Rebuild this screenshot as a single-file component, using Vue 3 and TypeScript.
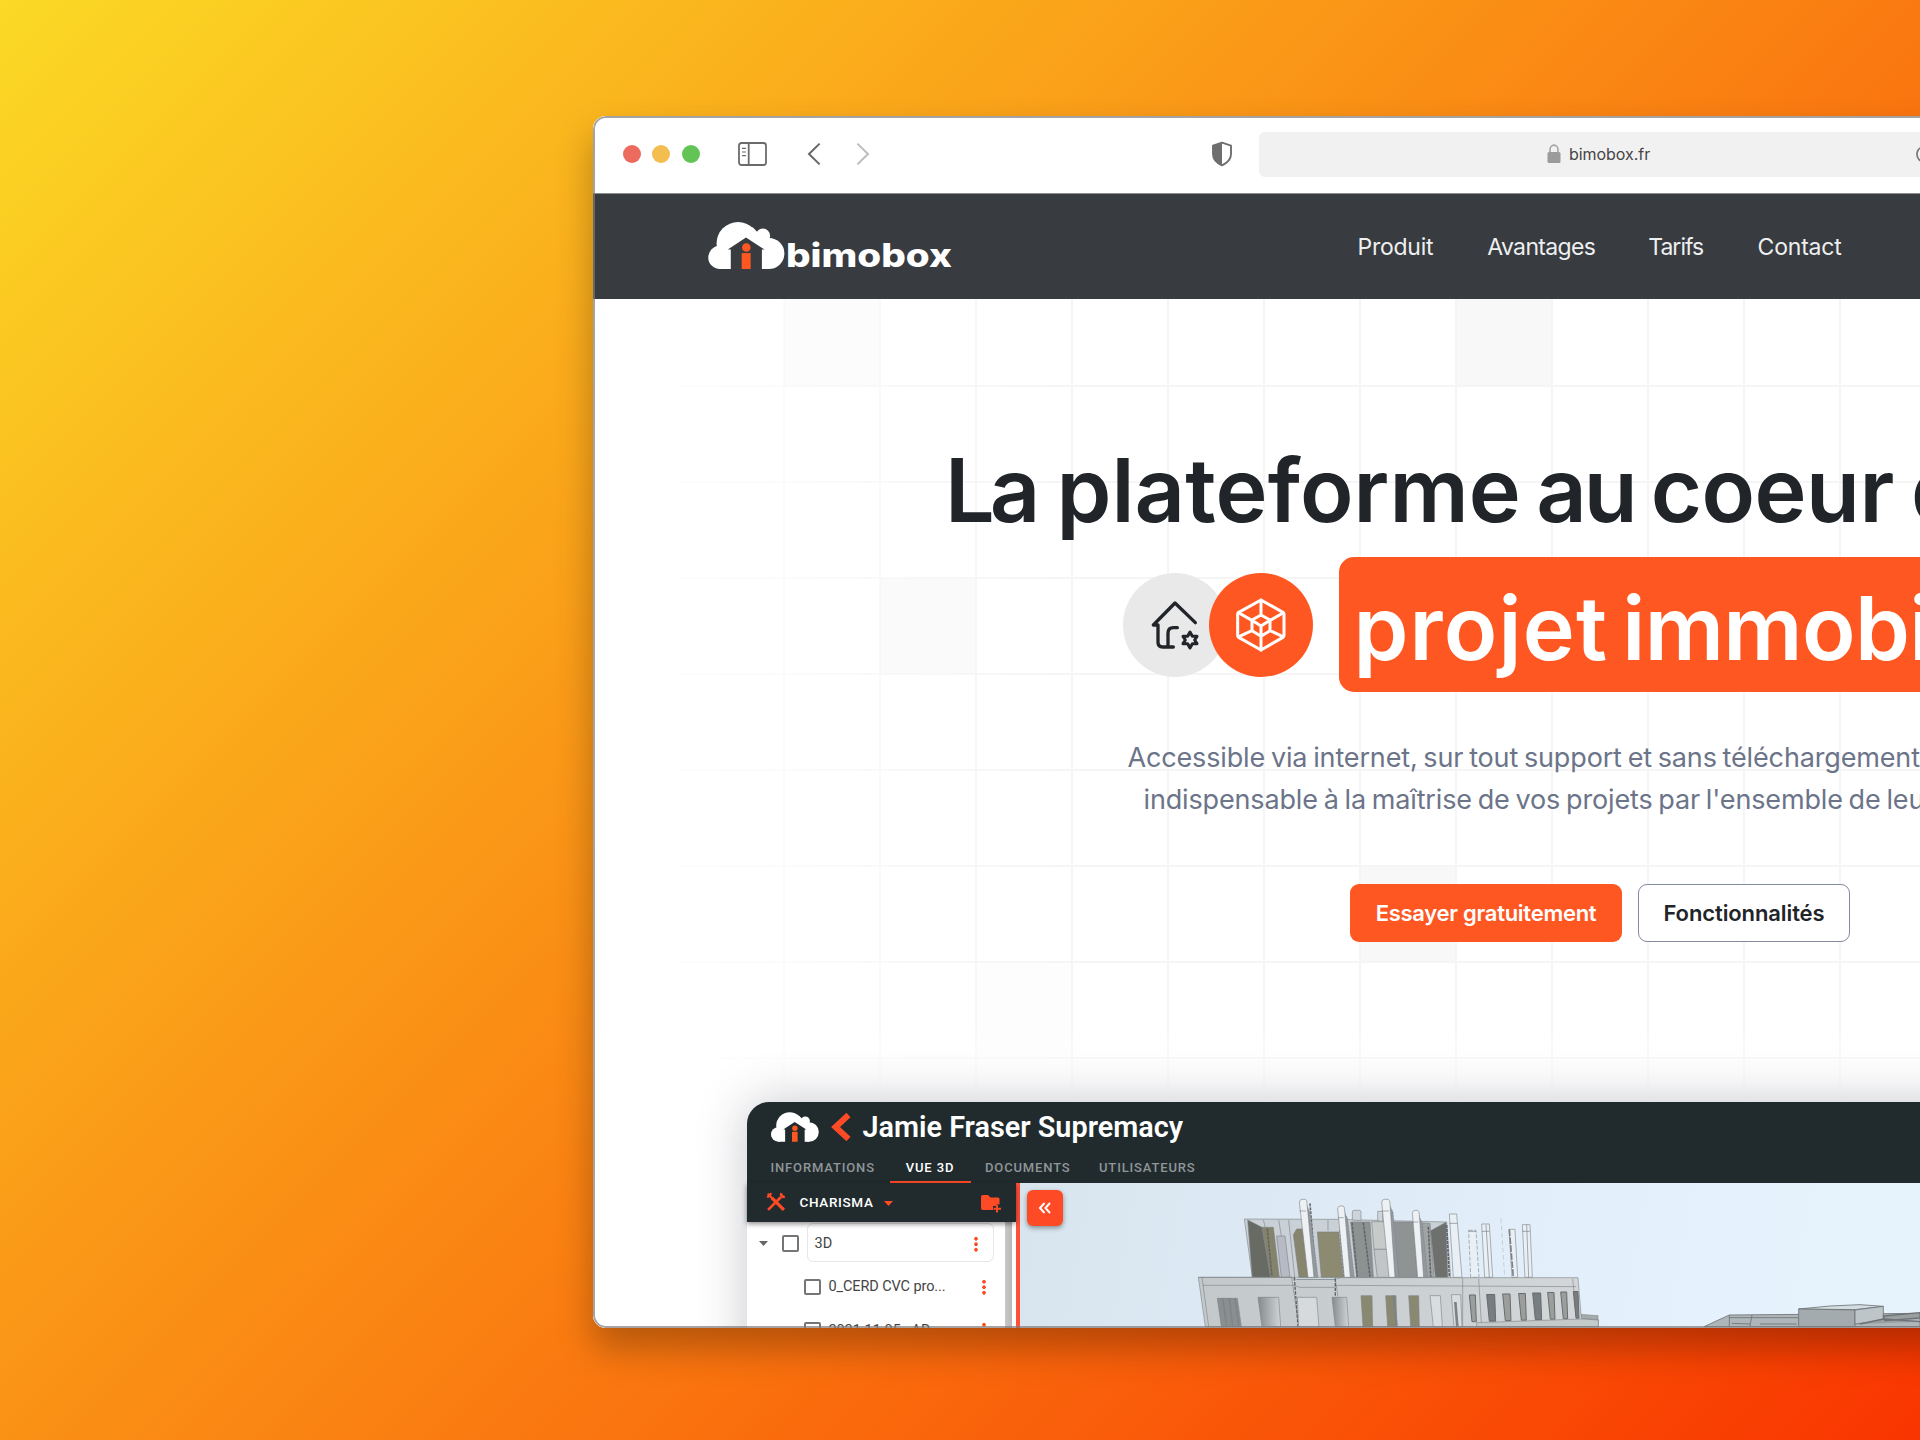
<script setup lang="ts">
const columns: number[] = Array.from({ length: 13 }, (_, i) => 191 + i * 96)
const rows: number[] = Array.from({ length: 8 }, (_, i) => 87 + i * 96)
const cells: { x: number; y: number; h: number; o: number }[] = [
  { x: 191, y: 0, h: 87, o: 0.4 },
  { x: 863, y: 0, h: 87, o: 1 },
  { x: 287, y: 279, h: 96, o: 0.7 },
  { x: 767, y: 567, h: 96, o: 1 },
  { x: 383, y: 663, h: 96, o: 0.35 },
]
const nav: { label: string; gap: number; spacing: number }[] = [
  { label: 'Produit', gap: 0, spacing: -0.25 },
  { label: 'Avantages', gap: 54, spacing: -0.65 },
  { label: 'Tarifs', gap: 53, spacing: -1 },
  { label: 'Contact', gap: 54.5, spacing: -0.2 },
]
interface Word { text: string; spacing: number; after: number }
const headline: Word[] = [
  { text: 'La', spacing: -5, after: 0.5 },
  { text: 'plateforme', spacing: 0.1, after: -5.4 },
  { text: 'au', spacing: -3, after: -4.6 },
  { text: 'coeur', spacing: -0.5, after: -3.5 },
  { text: 'de', spacing: -0.5, after: 0 },
]
const highlight: Word[] = [
  { text: 'projet', spacing: 1.2, after: -6.8 },
  { text: 'immobilier', spacing: -0.6, after: 0 },
]
const wordStyle = (w: Word) => ({ letterSpacing: w.spacing + 'px', marginRight: w.after + 'px' })
const files: string[] = ['0_CERD CVC pro...', '2021-11-05 - AR...']
const windowsLeft: number[][] = [[543, 578], [617, 650], [686, 718]]
const windowsRight: number[][] = [[868, 886], [920, 944], [968, 990], [1016, 1036], [1058, 1082], [1103, 1122], [1142, 1160], [1180, 1194]]
const towers: { x: number; y: number; w: number; s: number }[] = [
  { x: 358, y: 88, w: 20, s: 24 },
  { x: 473, y: 108, w: 18, s: 20 },
  { x: 605, y: 88, w: 22, s: 18 },
  { x: 697, y: 121, w: 18, s: 16 },
]
</script>

<template>
  <svg class="defs" width="0" height="0">
    <symbol id="cloud" viewBox="26 34 231 142">
      <g fill="#fff">
        <circle cx="61" cy="141" r="35" />
        <circle cx="116" cy="99" r="65" />
        <circle cx="191" cy="76" r="22" />
        <circle cx="209" cy="129" r="47" />
        <path d="M61 100 160 50 209 100V176H61Z" />
      </g>
      <path d="M140 81 196 117H188V177H94V117H85Z" fill="currentColor" />
      <circle cx="141" cy="111" r="13" fill="#ff5722" />
      <rect x="127" y="128" width="27" height="48" fill="#ff5722" />
    </symbol>
  </svg>
  <main class="scene">
    <section class="window">
      <div class="toolbar">
        <i class="light red"></i><i class="light yellow"></i><i class="light green"></i>
        <svg class="side" width="29" height="24" viewBox="0 0 29 24" fill="none" stroke="#6b6b6b" stroke-width="1.8">
          <rect x="1" y="1" width="27" height="22" rx="2.5" />
          <path d="M10.7 1V23" />
          <path d="M4 6.3h4M4 10h4M4 13.7h4" stroke-width="1.2" />
        </svg>
        <svg class="back" width="14" height="24" viewBox="0 0 14 24" fill="none" stroke="#666" stroke-width="2"><path d="M12.6 1.6 2 12 12.6 22.4" /></svg>
        <svg class="fwd" width="14" height="24" viewBox="0 0 14 24" fill="none" stroke="#bcbcbc" stroke-width="2"><path d="M1.4 1.6 12 12 1.4 22.4" /></svg>
        <svg class="shield" width="22" height="26" viewBox="0 0 22 26">
          <path d="M11 1.6 20 4.6V13C20 18 16.5 21.8 11 24.4 5.5 21.8 2 18 2 13V4.6Z" fill="none" stroke="#6e6e6e" stroke-width="1.9" stroke-linejoin="round" />
          <path d="M11 1.6V24.4C5.5 21.8 2 18 2 13V4.6Z" fill="#6e6e6e" />
        </svg>
        <div class="url">
          <svg width="14" height="19" viewBox="0 0 14 19"><path d="M3 9V5.6a4 4.5 0 0 1 8 0V9" fill="none" stroke="#a3a3a3" stroke-width="1.6" /><rect x=".5" y="8" width="13" height="11" rx="1.5" fill="#9b9b9b" /></svg>
          <span>bimobox.fr</span>
          <svg class="reload" width="20" height="20" viewBox="0 0 20 20" fill="none" stroke="#777" stroke-width="1.7"><path d="M12 2.5A8 8 0 1 0 18 10" /><path d="M9 0l4 2.7L9.5 6" /></svg>
        </div>
      </div>
      <header class="site">
        <svg class="cloud" width="77" height="47"><use href="#cloud" /></svg>
        <svg class="wordmark" width="170" height="40"><text x="1" y="33" textLength="166" lengthAdjust="spacingAndGlyphs">bimobox</text></svg>
        <nav>
          <a v-for="n in nav" :key="n.label" :style="{ marginLeft: n.gap + 'px', letterSpacing: n.spacing + 'px' }">{{ n.label }}</a>
        </nav>
      </header>
      <div class="hero">
        <svg class="grid" width="1327" height="803">
          <defs>
            <linearGradient id="fx" x1="0" x2="1"><stop offset=".06" stop-color="#fff" stop-opacity=".15" /><stop offset=".36" stop-color="#fff" /></linearGradient>
            <linearGradient id="fy" x1="0" y1="0" x2="0" y2="1"><stop offset=".9" stop-color="#fff" stop-opacity="0" /><stop offset="1" stop-color="#fff" /></linearGradient>
            <mask id="fade"><rect width="1327" height="803" fill="url(#fx)" /></mask>
          </defs>
          <rect v-for="(c, i) in cells" :key="'c' + i" :x="c.x" :y="c.y" width="96" :height="c.h" fill="#f8f8f8" :opacity="c.o" />
          <g mask="url(#fade)" fill="#f5f5f6">
            <rect v-for="x in columns" :key="'x' + x" :x="x - 1" y="0" width="2" height="803" />
            <rect v-for="y in rows" :key="'y' + y" x="86" :y="y - 1" width="1241" height="2" />
          </g>
          <rect width="1327" height="803" fill="url(#fy)" />
        </svg>
        <h1>
          <span class="line first"><template v-for="w in headline" :key="w.text"><span :style="wordStyle(w)">{{ w.text }}</span>{{ ' ' }}</template></span>
          <span class="line second">
            <span class="disc gray">
              <svg width="104" height="104" viewBox="0 0 312 312" fill="none" stroke="#212529" stroke-width="10" stroke-linecap="round" stroke-linejoin="round">
                <path d="M217 149 156 90 91 156H105V208Q105 222 119 222H151M135 220V181Q135 164 151 164H163" />
                <path d="M201 177 208 190H222L215 201 222 212H208L201 225 194 212H180L187 201 180 190H194Z" stroke-width="9" />
              </svg>
            </span>
            <span class="disc orange">
              <svg width="104" height="104" viewBox="0 0 312 312" fill="none" stroke="#fff" stroke-width="9" stroke-linecap="round" stroke-linejoin="round">
                <path d="M156 81 222 118Q225 120 225 124V187Q225 191 222 193L156 231 89 193Q86 191 86 187V124Q86 120 89 118Z" />
                <path d="M156 81V124M90 120 130 143M222 120 182 143M90 191 130 172M222 191 182 172M156 231V158M156 126 183 141V173L156 190 129 173V141ZM129 142 156 159 183 142" />
              </svg>
            </span>
            <span class="mark"><template v-for="w in highlight" :key="w.text"><span :style="wordStyle(w)">{{ w.text }}</span>{{ ' ' }}</template></span>
          </span>
        </h1>
        <p>
          <span class="l1">Accessible via internet, sur tout support et sans téléchargement,</span>
          <span class="l2">indispensable à la maîtrise de vos projets par l'ensemble de leurs</span>
        </p>
        <div class="actions">
          <a class="btn solid"><span>Essayer gratuitement</span></a>
          <a class="btn outline"><span>Fonctionnalités</span></a>
        </div>
        <div class="card">
          <div class="title">
            <svg class="mini" width="48" height="30"><use href="#cloud" /></svg>
            <svg class="chev" width="20" height="28" viewBox="0 0 20 28" fill="none" stroke="#ff4a26" stroke-width="6"><path d="M17.5 2 4.5 14 17.5 26" /></svg>
            <strong>Jamie Fraser Supremacy</strong>
          </div>
          <div class="tabs">
            <span class="t1">INFORMATIONS</span><span class="t2">VUE 3D</span><span class="t3">DOCUMENTS</span><span class="t4">UTILISATEURS</span>
          </div>
          <div class="body">
            <aside>
              <div class="tool">
                <svg class="wrench" width="20" height="20" viewBox="0 0 24 24" fill="none" stroke="#ff4a26">
                  <path d="M2.5 21.5 18 6" stroke-width="3.2" /><path d="M18.500 1.500A3 3 0 0 0 22.500 5.500" stroke-width="3.400" /><path d="M7 7 21.500 21.500" stroke-width="4" /><path d="M2 2 8 8M1.500 6.500 6.500 1.500" stroke-width="2.600" />
                </svg>
                <b>CHARISMA</b>
                <svg class="caret" width="9" height="5" viewBox="0 0 9 5"><path d="M0 0H9L4.5 5Z" fill="#ff4a26" /></svg>
                <svg class="folder" width="20" height="18" viewBox="0 0 20 18"><path d="M0 2Q0 0 2 0H7L9.5 2.5H17Q18.5 2.5 18.5 4V9.5H15.5V11H12V15H2Q0 15 0 13Z" fill="#ff4a26" /><path d="M16 10V17.5M12.5 13.7H20" stroke="#ff4a26" stroke-width="1.9" /></svg>
              </div>
              <div class="list">
                <div class="items">
                  <div class="row top">
                    <svg class="caret" width="9" height="5" viewBox="0 0 9 5"><path d="M0 0H9L4.5 5Z" fill="#666" /></svg>
                    <i class="check"></i>
                    <div class="field"><span>3D</span><i class="dots"></i></div>
                  </div>
                  <div v-for="f in files" :key="f" class="row sub"><i class="check"></i><span>{{ f }}</span><i class="dots"></i></div>
                </div>
                <div class="scroll"></div>
              </div>
            </aside>
            <div class="view">
              <svg class="model" width="904" height="150" viewBox="1020 1183 904 150" stroke-linejoin="round">
                <defs>
                  <linearGradient id="wall" x1="0" x2="1"><stop offset="0" stop-color="#c3c8ca" /><stop offset="1" stop-color="#d3d7d9" /></linearGradient>
                  <linearGradient id="door" x1="0" x2="1"><stop offset="0" stop-color="#858b8c" /><stop offset="1" stop-color="#d0d5d7" /></linearGradient>
                </defs>
                <g transform="translate(1180 1170) scale(.33333)" stroke="#7c8285" stroke-width="1.8">
                  <path d="M193 147 470 148 800 156 812 322H217Z" fill="#c9d0d6" />
                  <path d="M203 150 246 172 272 322H217Z" fill="#686b63" />
                  <path d="M246 172H280L298 322H272Z" fill="#85836c" /><path d="M290 198H315L330 322H304Z" fill="#b5bac5" />
                  <path d="M250 150 256 172M296 150 304 198M326 150 344 322M444 150V182" fill="none" />
                  <path d="M340 194 350 177H370L386 322H357Z" fill="#87856e" /><path d="M412 186H476L490 322H424Z" fill="#8c8a71" />
                  <path d="M512 156H570L580 322H530Z" fill="#8e9191" /><path d="M575 155H640L650 238H582Z" fill="#c6cac9" />
                  <path d="M582 238H648V322H592Z" fill="#c1c5c6" /><path d="M636 156H700L712 322H650Z" fill="#909394" />
                  <path d="M718 158 750 160 762 322H732Z" fill="#a1a4a4" /><path d="M752 182 798 157 803 322H766Z" fill="#6e706d" />
                  <g stroke="#5e6264" stroke-width="4.5" stroke-dasharray="9 3" fill="none">
                    <path d="M262 176 276 320M390 100 408 320M516 158 532 320M550 158 570 320M645 240 655 320M745 170 752 320M800 165 808 320M480 180 493 320" />
                  </g>
                  <path d="M517 150V126Q517 121 522 121H538Q543 121 543 126V152ZM593 152V124H608V155Z" fill="#ced5da" />
                  <g v-for="t in towers" :key="t.x">
                    <path :d="`M${t.x + t.w} ${t.y + 14} l12 24 l${t.s} ${284 - t.y} h-22 Z`" fill="#92989e" stroke-dasharray="6 3" />
                    <path :d="`M${t.x} ${t.y + 8} q2 -8 8 -8 h${t.w - 10} q5 2 5 12 L${t.x + t.w + t.s} 322 h-18 Z`" fill="#edf1f3" />
                    <path :d="`M${t.x} ${t.y + 35} h${t.w}`" />
                  </g>
                  <g fill="#e8eff5">
                    <path d="M808 132H830L846 322H820Z" /><path d="M866 181H888L897 322H872Z" stroke-dasharray="12 5" /><path d="M905 162H928L938 322H914Z" />
                    <path d="M987 178H1005L1013 322H996Z" /><path d="M1027 164H1050L1057 322H1035Z" />
                  </g>
                  <path d="M808 160H832M866 184H888M905 184H928M1027 184H1050M918 164 928 322M1040 164 1046 322" fill="none" stroke-width="2" />
                  <path d="M963 145 974 322" fill="none" stroke="#aab1b6" stroke-width="1.5" stroke-dasharray="14 8" />
                  <path d="M988 178 1000 322" stroke-width="5" stroke-dasharray="20 4" />
                  <path d="M1196 433 1254 437V462H1190Z" fill="#a5abad" />
                  <path d="M55 322H335L350 328H466L480 323H1194L1204 445 1255 450V470H76Z" fill="url(#wall)" />
                  <path d="M55 322H335M68 346H345L358 352H462L474 346 1188 350M66 322 86 470M335 322 357 470M466 328 474 380M848 324V470M896 326 904 458M1178 326 1190 445M350 328H466" fill="none" />
                  <path d="M343 322 354 470M466 325V380" stroke="#5e6264" stroke-width="4" stroke-dasharray="10 4" />
                  <path d="M112 385H172L184 470H124Z" fill="#8a8f90" /><path d="M128 385 140 470M148 385 158 470M165 385 177 470" stroke-width="5" stroke-dasharray="5 2" />
                  <path d="M234 382H296L302 470H246Z" fill="url(#door)" /><path d="M352 382H410L417 470H356Z" fill="#d6dadc" />
                  <path d="M456 382H500L506 470H466Z" fill="url(#door)" />
                  <path v-for="w in windowsLeft" :key="w[0]" :d="`M${w[0]} 377H${w[1] - 2}L${w[1]} 470H${w[0] + 6}Z`" fill="#898972" />
                  <path d="M640 377 650 470" stroke-width="8" stroke-dasharray="7 2" />
                  <path d="M750 377H781L787 470H760ZM814 374H842L846 470H822Z" fill="#d9dddf" /><path d="M826 396 832 470" stroke-width="8" />
                  <path v-for="(w, i) in windowsRight" :key="w[0]" :d="`M${w[0]} ${375 - i * 1.5}H${w[1]}L${w[1] + 3} ${455 - i * 1.5}H${w[0] + 8}Z`" :fill="i % 3 === 1 ? '#777d80' : '#9b9e9b'" stroke="#666c6e" stroke-width="3" />
                  <path d="M890 458 1204 447 1255 450V470H890Z" fill="#c4c9c9" />
                </g>
                <g transform="translate(1600 1170) scale(.33333)" stroke="#6c7275" stroke-width="2.5">
                  <path d="M312 470 388 435 960 430V470Z" fill="#afb6b9" />
                  <path d="M388 435V470M456 435 450 468M388 443H595M395 460 450 462M480 462H590" fill="none" />
                  <path d="M596 417 690 408 780 404 850 409 765 419Z" fill="#d6dde0" /><path d="M596 417 765 420V470H596Z" fill="#a4abae" /><path d="M765 420 850 409V452L765 462Z" fill="#bdc5c8" />
                  <path d="M850 438 960 428V444L855 452ZM780 462 850 447 960 455" fill="#999f9f" stroke-width="4" />
                </g>
              </svg>
              <span class="collapse"><svg width="14" height="14" viewBox="0 0 14 14" fill="none" stroke="#fff" stroke-width="2"><path d="M6.5 2 2 7l4.5 5M12 2 7.5 7l4.5 5" /></svg></span>
            </div>
          </div>
        </div>
      </div>
    </section>
  </main>
</template>

<style>
body { margin: 0; overflow: hidden; }
</style>

<style scoped>
.defs { position: absolute; }
.scene {
  box-sizing: border-box; width: 1920px; height: 1440px; overflow: hidden; padding: 116px 0 0 593px;
  background: linear-gradient(135deg, #fbd925 0%, #fa8613 50%, #f93500 100%); font-family: Inter, "Liberation Sans", sans-serif;
}
.window {
  position: relative; width: 1500px; height: 1212px; border-radius: 13px; background: #fff; overflow: hidden;
  box-shadow: 0 20px 36px rgba(0, 0, 0, .28); display: flex; flex-direction: column; white-space: nowrap;
}
.window::after { content: ""; position: absolute; inset: 0; border: 2.5px solid rgba(128, 123, 122, .7); border-radius: 13px; pointer-events: none; z-index: 5; }
.toolbar { height: 77px; box-sizing: content-box; flex: none; display: flex; align-items: center; padding-left: 29.5px; border-bottom: 1px solid #8b8d8f; background: #fff; }
.toolbar > :not(.url) { margin-bottom: 1.5px; }
.light { width: 18px; height: 18px; border-radius: 50%; margin-right: 11.5px; }
.red { background: #ec6a5e; } .yellow { background: #f4bd50; } .green { background: #61c454; }
.side { margin-left: 26.5px; }
.back { margin-left: 40.5px; }
.fwd { margin-left: 35px; }
.shield { margin-left: 341px; }
.url { margin-left: 25.5px; width: 750px; flex: none; height: 45px; background: #f1f1f1; border-radius: 6px; display: flex; align-items: center; box-sizing: border-box; padding: 0 0 1.5px 288.5px; font-size: 16px; color: #454545; }
.url span { margin-left: 8px; width: 346px; letter-spacing: -.05px; flex: none; }
.url svg { flex: none; }
.site { height: 104.5px; flex: none; background: #383b3f; color: #383b3f; display: flex; align-items: center; }
.cloud { margin-left: 115px; margin-top: -1px; flex: none; }
.wordmark { flex: none; font: 800 33px Inter, sans-serif; fill: #fff; margin-top: 16px; }
nav { margin: 1px 0 0 402.5px; display: flex; font-size: 23px; color: #eeeff0; }
.hero { position: relative; flex: none; height: 1029.5px; padding-top: 137.5px; box-sizing: border-box; background: #fff; }
.grid { position: absolute; left: 0; top: 0; }
h1, p, .actions, .card { position: relative; }
h1 { margin: 0; font-size: 88px; font-weight: 600; color: #212529; }
.line { line-height: 108.5px; letter-spacing: -1.5px; }
.first { display: block; padding-left: 352px; height: 110px; }
.second { display: flex; margin-top: 11px; height: 135px; padding-left: 530px; align-items: center; }
.disc { width: 104px; height: 104px; border-radius: 50%; flex: none; }
.disc svg { display: block; }
.gray { background: #e9e9e9; }
.orange { background: #ff5722; margin-left: -18px; }
.mark { margin-left: 26px; height: 135px; box-sizing: border-box; padding: 7px 0 0 14.5px; width: 800px; background: #ff5722; color: #fff; border-radius: 15px; line-height: 129px; }
p { margin: 44.5px 0 0; font-size: 27px; line-height: 42.8px; color: #6c7489; display: flex; flex-direction: column; letter-spacing: -.15px; word-spacing: -1.6px; }
.l1 { padding-left: 534.5px; }
.l2 { padding-left: 550.5px; }
.actions { margin-top: 62px; padding-left: 757px; display: flex; gap: 16px; font-size: 22px; font-weight: 600; }
.btn { height: 58px; box-sizing: border-box; border-radius: 9px; display: flex; align-items: center; justify-content: center; }
.solid { width: 272px; background: #ff5722; color: #fff; letter-spacing: -.27px; }
.outline { width: 212px; background: #fff; color: #212529; border: 1.5px solid #858b9f; letter-spacing: -.1px; }
.card { margin: 159.5px 0 0 153.5px; width: 1300px; height: 300px; border-radius: 22px 22px 0 0; background: #212b2e; color: #212b2e; font-family: Roboto, sans-serif; box-shadow: 0 0 50px rgba(40, 44, 60, .26); }
.title { height: 50px; display: flex; align-items: center; padding-left: 24px; }
.chev { margin-left: 12px; }
.title strong { margin-left: 12px; font-size: 28.8px; font-weight: 600; color: #fff; }
.tabs { height: 31px; display: flex; font-size: 13px; font-weight: 500; letter-spacing: .85px; color: #8f9698; line-height: 32px; }
.t1 { margin-left: 24px; width: 119px; }
.t2 { box-sizing: border-box; width: 81px; text-align: center; color: #fff; border-bottom: 2.5px solid #ff4a26; height: 31.5px; position: relative; z-index: 1; }
.t3 { margin-left: 14.5px; width: 114px; }
.body { display: flex; height: 200px; }
aside { width: 269px; flex: none; }
.tool { height: 39px; display: flex; align-items: center; background: #212b2e; position: relative; z-index: 1; box-shadow: 0 2px 5px rgba(0, 0, 0, .45); }
.wrench { margin-left: 19px; }
.tool b { margin-left: 14px; width: 84px; font-size: 13.5px; font-weight: 500; letter-spacing: .65px; color: #fff; margin-top: -1px; }
.tool .caret { margin-top: 3px; }
.folder { margin-left: 88px; margin-top: 3px; }
.list { display: flex; height: 161px; background: #fff; font-size: 14.5px; color: #444; }
.items { width: 258.5px; }
.scroll { width: 6.5px; background: linear-gradient(90deg, #c8c8c8, #b8b8b8); }
.row { height: 43.5px; display: flex; align-items: center; }
.row .caret { margin-left: 12px; }
.check { box-sizing: border-box; width: 16.5px; height: 16.5px; border: 2px solid #757575; border-radius: 2px; margin-left: 14.5px; flex: none; }
.field { margin-left: 8px; margin-top: -1px; box-sizing: border-box; width: 187px; height: 39px; border: 1px solid #e6e6e6; border-radius: 6px; display: flex; align-items: center; justify-content: space-between; padding: 2px 15px 0 7px; }
.sub .check { margin-left: 57.5px; }
.sub span { margin-left: 8px; width: 153.5px; letter-spacing: -.1px; }
.dots { width: 4px; height: 16.5px; background: radial-gradient(circle at 50% 50%, #ff4a26 1.5px, transparent 2.1px) 0 0 / 4px 5.5px; }
.view { position: relative; flex: 1; border-left: 4.5px solid #ff5038; background: linear-gradient(100deg, #d8e5ef 0%, #dfebf6 35%, #e5f2fd 65%, #e7f4fc 100%); }
.model { display: block; }
.collapse { position: absolute; left: 7px; top: 7px; width: 36px; height: 36px; border-radius: 6px; background: #ff4a26; box-shadow: 0 2px 5px rgba(0, 0, 0, .4); display: flex; align-items: center; justify-content: center; }
</style>
